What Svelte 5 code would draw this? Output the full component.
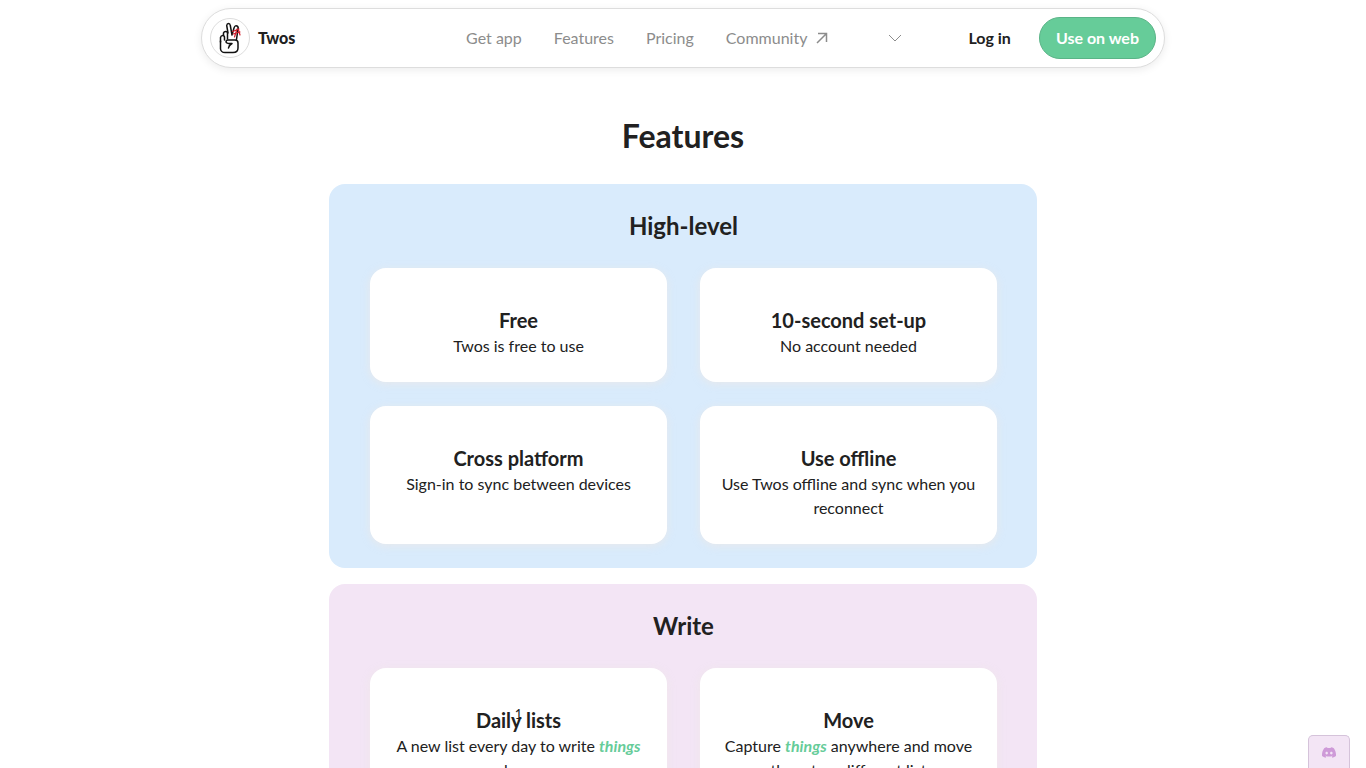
<script lang="ts">
  type Feature = { title: string; text: string; badge?: string };
  type Group = { name: string; tone: string; features: Feature[] };

  const links = ['Get app', 'Features', 'Pricing'];

  const groups: Group[] = [
    {
      name: 'High-level',
      tone: 'blue',
      features: [
        { title: 'Free', text: 'Twos is free to use' },
        { title: '10-second set-up', text: 'No account needed' },
        { title: 'Cross platform', text: 'Sign-in to sync between devices' },
        { title: 'Use offline', text: 'Use Twos offline and sync when you reconnect' }
      ]
    },
    {
      name: 'Write',
      tone: 'purple',
      features: [
        { title: 'Daily lists', text: 'A new list every day to write things down', badge: '1' },
        { title: 'Move', text: 'Capture things anywhere and move them to a different list' }
      ]
    }
  ];

  // Keeps the word "things" as its own piece so it can be highlighted
  const split = (text: string) => text.split(/(things)/);
</script>

<header class="navbar">
  <a class="brand" href="/">
    <span class="logo">
      <svg viewBox="0 0 40 40" width="40" height="40" fill="none" stroke="#111" stroke-width="1.5" stroke-linecap="round" stroke-linejoin="round" aria-hidden="true">
        <path d="M10.5 23V31Q11 34.5 15 34.5H23Q28 34.5 28 30V25Q28 22 25 22H18Q16 22 16 24Q17 26 22 25.5Q19 27 18.5 30" />
        <path d="M10.5 24V19.5Q11 17.5 12.7 17.5Q14.5 17.5 14.5 19.5V22M13.5 17V15Q14 13.5 15.7 13.5Q17.5 13.5 17.5 15V21" />
        <path d="M18 15L16.7 7.5Q17 5.5 18.5 5.5Q20 5.5 20.3 7.5L22 17L24 10Q25 7 27 8Q28.7 9 28 11L26.5 21.5" />
        <path d="M22.5 13.5L29 11M23 16L30 14M27 11L24.5 19M28.5 12L30 17" stroke="#d31d2b" stroke-width="1.2" />
      </svg>
    </span>
    <span class="brand-name">Twos</span>
  </a>

  <nav class="links" aria-label="Main">
    {#each links as link}
      <a href="#{link.toLowerCase().replace(' ', '-')}">{link}</a>
    {/each}
    <a class="external" href="#community">
      Community
      <svg viewBox="0 0 12 12" width="12" height="12" fill="none" stroke="currentColor" stroke-width="1.5" aria-hidden="true">
        <path d="M1 11L10.5 1.5M2 1.5H10.5V10" />
      </svg>
    </a>
  </nav>

  <button class="more" type="button" aria-label="More">
    <svg viewBox="0 0 14 8" width="14" height="8" fill="none" stroke="currentColor" stroke-width="1" aria-hidden="true">
      <path d="M1 1L7 7L13 1" />
    </svg>
  </button>

  <div class="account">
    <a class="login" href="#login">Log in</a>
    <button class="primary" type="button">Use on web</button>
  </div>
</header>

<main>
  <h1>Features</h1>

  {#each groups as group}
    <section class="group {group.tone}">
      <h2>{group.name}</h2>
      <div class="cards">
        {#each group.features as feature}
          <article class="card">
            {#if feature.badge}
              <span class="badge">{feature.badge}</span>
            {/if}
            <h3>{feature.title}</h3>
            <p>
              {#each split(feature.text) as part}{#if part === 'things'}<em>{part}</em>{:else}{part}{/if}{/each}
            </p>
          </article>
        {/each}
      </div>
    </section>
  {/each}
</main>

<a class="discord" href="#discord" aria-label="Discord">
  <svg viewBox="0 0 24 18" width="14" height="11" aria-hidden="true">
    <path
      fill="currentColor"
      fill-rule="evenodd"
      d="M20.3 1.5A19.8 19.8 0 0 0 15.4 0L14.7 1.3A18.3 18.3 0 0 0 9.3 1.3L8.6 0A19.8 19.8 0 0 0 3.7 1.5C.5 6.1-.3 10.6.1 15.1A19.9 19.9 0 0 0 6.1 18L7.4 16L5.4 15L5.9 14.6A14.2 14.2 0 0 0 18.1 14.6L18.6 15L16.6 16L17.9 18A19.9 19.9 0 0 0 23.9 15.1C24.4 9.9 23.1 5.4 20.3 1.5ZM8 12.4C6.8 12.4 5.9 11.3 5.9 10S6.8 7.6 8 7.6S10.2 8.7 10.2 10S9.2 12.4 8 12.4ZM16 12.4C14.8 12.4 13.8 11.3 13.8 10S14.8 7.6 16 7.6S18.2 8.7 18.2 10S17.2 12.4 16 12.4Z"
    />
  </svg>
</a>

<style>
  :global(body) {
    background: #fff;
    color: #212121;
    font-family: Lato, 'Open Sans', sans-serif;
    font-size: 16px;
    line-height: 24px;
  }

  a {
    color: inherit;
    text-decoration: none;
  }

  button {
    font: inherit;
    cursor: pointer;
  }

  .navbar {
    position: sticky;
    top: 8px;
    z-index: 2;
    display: flex;
    align-items: center;
    box-sizing: border-box;
    width: calc(100% - 32px);
    max-width: 964px;
    margin: 8px auto 0;
    padding: 8px;
    background: #fff;
    border: 1px solid #ddd;
    border-radius: 30px;
    box-shadow: 0 2px 8px rgba(0, 0, 0, 0.08);
  }

  .brand {
    display: flex;
    flex: 1;
    align-items: center;
    gap: 8px;
    font-weight: 900;
  }

  .logo {
    box-sizing: border-box;
    display: flex;
    align-items: center;
    justify-content: center;
    width: 40px;
    height: 40px;
    border: 1px solid #ddd;
    border-radius: 50%;
  }

  .logo svg {
    flex: none;
  }

  .links {
    display: flex;
    gap: 32px;
    color: #8c8c8c;
  }

  .external {
    display: flex;
    align-items: center;
    gap: 9px;
  }

  .more {
    display: flex;
    margin: 0 58px 0 52px;
    padding: 8px;
    background: none;
    border: 0;
    color: #8c8c8c;
  }

  .account {
    display: flex;
    align-items: center;
    gap: 28px;
    font-weight: 700;
  }

  .primary {
    padding: 8px 16px;
    background: #66cc99;
    border: 1px solid #5ab487;
    border-radius: 21px;
    color: #fff;
  }

  main {
    box-sizing: border-box;
    max-width: 740px;
    margin: 0 auto;
    padding: 48px 16px;
    text-align: center;
  }

  h1,
  h2,
  h3,
  p {
    margin: 0;
  }

  h1 {
    margin-bottom: 28px;
    font-size: 32px;
    font-weight: 700;
    line-height: 40px;
  }

  .group {
    margin-bottom: 16px;
    padding: 26px 40px 24px 41px;
    border-radius: 16px;
  }

  .blue {
    background: #d9ebfc;
  }

  .purple {
    background: #f3e5f5;
  }

  h2 {
    margin-bottom: 26px;
    font-size: 24px;
    font-weight: 700;
    line-height: 32px;
  }

  .cards {
    display: grid;
    grid-template-columns: 1fr 1fr;
    gap: 24px 33px;
  }

  .card {
    position: relative;
    padding: 40px 16px 24px;
    background: #fff;
    border-radius: 16px;
    box-shadow: 0 2px 8px rgba(238, 232, 230, 0.7);
  }

  h3 {
    margin-bottom: 2px;
    font-size: 20px;
    font-weight: 700;
    line-height: 24px;
  }

  em {
    color: #66cc99;
    font-weight: 700;
  }

  .badge {
    position: absolute;
    top: 34px;
    left: 50%;
    transform: translateX(-50%);
    font-size: 13px;
  }

  .discord {
    position: fixed;
    right: 16px;
    bottom: 0;
    display: flex;
    justify-content: center;
    box-sizing: border-box;
    width: 42px;
    height: 33px;
    padding-top: 11px;
    background: #f3e5f5;
    border: 1px solid #d5c3da;
    border-bottom: 0;
    border-radius: 5px 5px 0 0;
    color: #ce9ad8;
  }

  @media (max-width: 700px) {
    .links,
    .more {
      display: none;
    }

    .cards {
      grid-template-columns: 1fr;
    }
  }
</style>
